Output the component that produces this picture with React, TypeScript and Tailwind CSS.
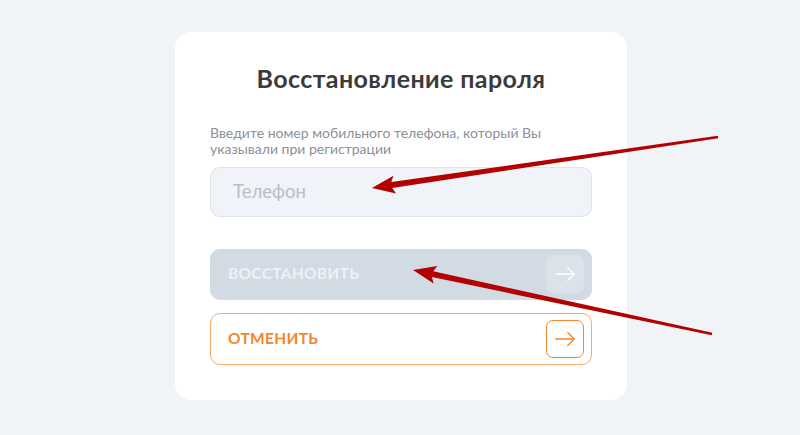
import React from 'react';

type Pt = [number, number];

// tapered red annotation arrow: thin tail, wider shaft near the head
function arrowPoints(tail: Pt, tip: Pt, headLen = 20, headW = 9, tailW = 1.2, shaftW = 3): string {
  const dx = tip[0] - tail[0];
  const dy = tip[1] - tail[1];
  const len = Math.hypot(dx, dy);
  const ux = dx / len;
  const uy = dy / len;
  const px = -uy;
  const py = ux;
  const bx = tip[0] - ux * headLen;
  const by = tip[1] - uy * headLen;
  const pts: Pt[] = [
    [tail[0] + px * tailW, tail[1] + py * tailW],
    [bx + px * shaftW, by + py * shaftW],
    [bx + px * headW - ux * 3, by + py * headW - uy * 3],
    [tip[0], tip[1]],
    [bx - px * headW - ux * 3, by - py * headW - uy * 3],
    [bx - px * shaftW, by - py * shaftW],
    [tail[0] - px * tailW, tail[1] - py * tailW],
  ];
  return pts.map((p) => `${p[0].toFixed(1)},${p[1].toFixed(1)}`).join(' ');
}

function ArrowIcon({ className }: { className?: string }) {
  return (
    <svg className={className} viewBox="0 0 24 24" fill="none" stroke="currentColor" strokeWidth={1.5} strokeLinecap="round" strokeLinejoin="round">
      <path d="M2 12h20M15 5l7 7-7 7" />
    </svg>
  );
}

export default function App() {
  return (
    <div
      className="relative flex h-[435px] w-[800px] justify-center overflow-hidden bg-[#f1f4f7] pt-[32px]"
      style={{ fontFamily: '"Lato", "Noto Sans", sans-serif' }}
    >
      <div className="ml-[2px] flex h-[368px] w-[452px] flex-col rounded-[16px] bg-white px-[35px]">
        <h1 className="mt-[28px] text-center text-[25px] font-bold tracking-[0.4px] text-[#3b3b3b]">
          Восстановление пароля
        </h1>
        <p className="mt-[27px] text-[14px] leading-[16px] text-[#8b9099]">
          Введите номер мобильного телефона, который Вы
          <br />
          указывали при регистрации
        </p>
        <div className="mt-[10px] flex h-[50px] items-center rounded-[10px] border border-[#dde3ea] bg-[#f0f3f7] px-[22px]">
          <span className="text-[18.5px] text-[#b5bfca]">Телефон</span>
        </div>
        <button className="mt-[32px] flex h-[51px] items-center justify-between rounded-[10px] bg-[#d2dae4] pl-[18px] pr-[8px]">
          <span className="text-[15.5px] font-bold tracking-[0.3px] text-[#eef1f5]">ВОССТАНОВИТЬ</span>
          <span className="flex h-[38px] w-[38px] items-center justify-center rounded-[7px] bg-[#dce2ea] text-white">
            <ArrowIcon className="h-[22px] w-[22px]" />
          </span>
        </button>
        <button className="mt-[13px] flex h-[52px] items-center justify-between rounded-[10px] border border-[#fca96a] bg-white pl-[17px] pr-[7px]">
          <span className="text-[15.5px] font-bold tracking-[0.3px] text-[#f6852b]">ОТМЕНИТЬ</span>
          <span className="flex h-[38px] w-[38px] items-center justify-center rounded-[7px] border border-[#f6852b] text-[#f6852b]">
            <ArrowIcon className="h-[22px] w-[22px]" />
          </span>
        </button>
      </div>

      <svg className="pointer-events-none absolute inset-0 h-full w-full" viewBox="0 0 800 435">
        <polygon points={arrowPoints([718, 137], [372, 188])} fill="#b30000" />
        <polygon points={arrowPoints([712, 334], [413, 270])} fill="#b30000" />
      </svg>
    </div>
  );
}
